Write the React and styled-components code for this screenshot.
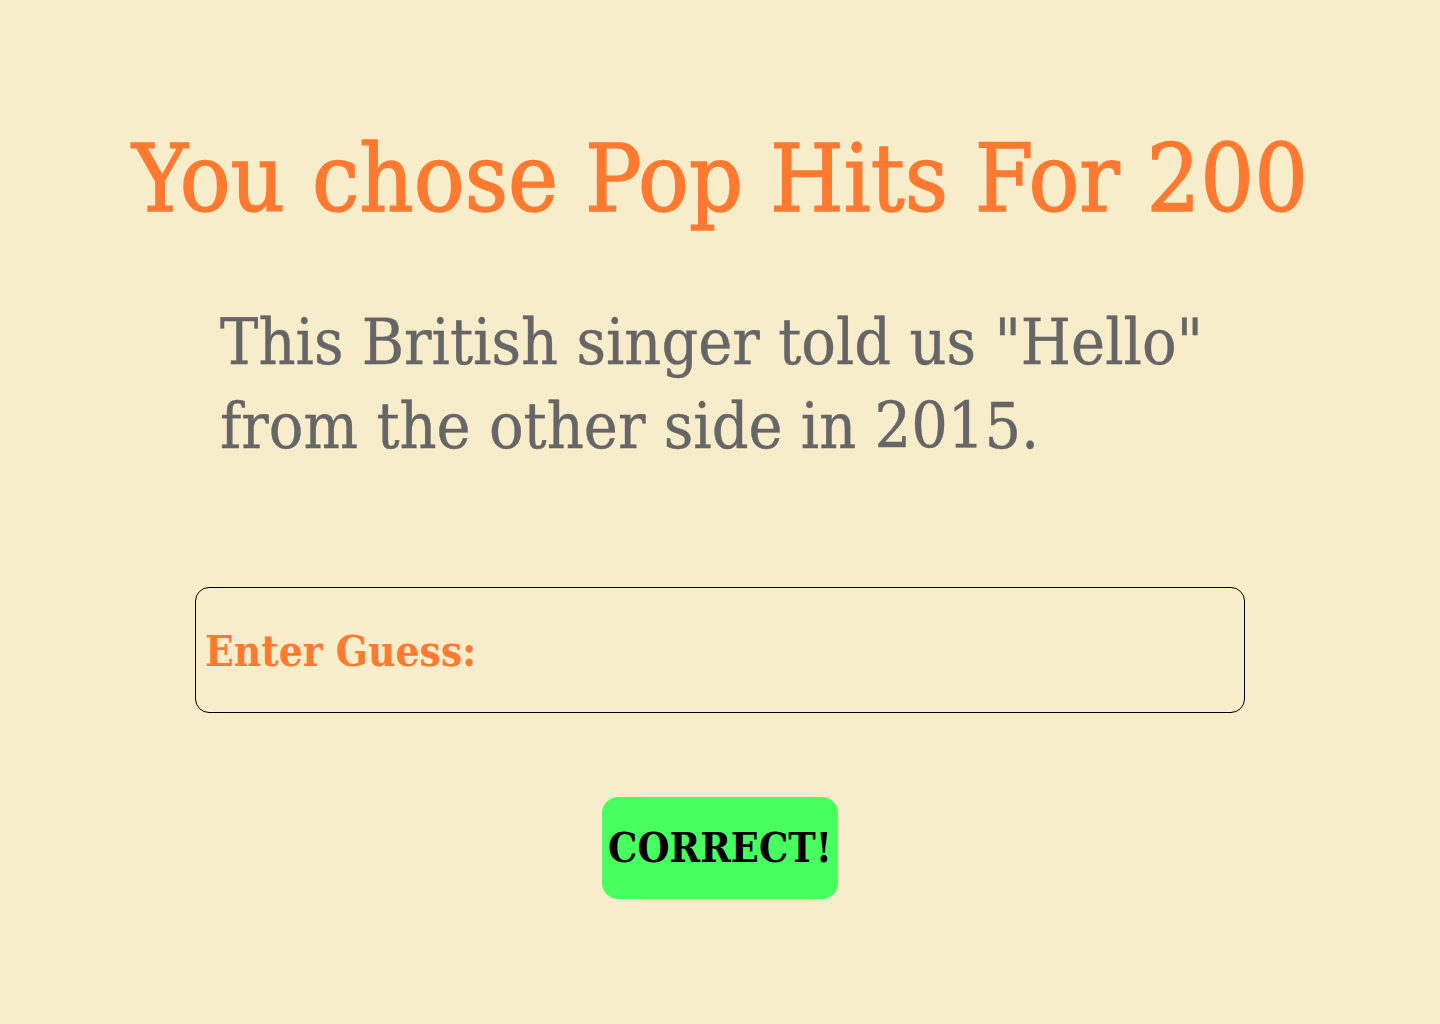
import React, { useState } from 'react';
import styled, { createGlobalStyle } from 'styled-components';

const GlobalStyle = createGlobalStyle`
  html, body {
    margin: 0;
    padding: 0;
    background-color: #f8edca;
  }
  body {
    font-family: "DejaVu Serif Condensed", "DejaVu Serif", "Liberation Serif", serif;
  }
`;

const Page = styled.div`
  min-height: 1024px;
  display: flex;
  flex-direction: column;
  align-items: center;
  padding-top: 119px;
  box-sizing: border-box;
`;

const Title = styled.h1`
  margin: 0;
  font-weight: 400;
  font-size: 94px;
  line-height: 120px;
  color: #ff7a30;
  -webkit-text-stroke: 1.4px #ff7a30;
  text-align: center;
  white-space: nowrap;
`;

const Question = styled.p`
  width: 1000px;
  margin: 61px 0 0;
  font-size: 64px;
  line-height: 84px;
  color: #666666;
  -webkit-text-stroke: 0.4px #666666;
  text-align: left;
`;

const GuessBox = styled.label`
  width: 1050px;
  height: 126px;
  margin-top: 119px;
  box-sizing: border-box;
  border: 1px solid #000;
  border-radius: 14px;
  display: flex;
  align-items: center;
  padding: 0 9px;
`;

const GuessLabel = styled.span`
  font-weight: 700;
  font-size: 42px;
  color: #ff7a30;
  white-space: nowrap;
  margin-top: 2px;
`;

const GuessInput = styled.input`
  flex: 1;
  height: 100%;
  border: none;
  background: transparent;
  outline: none;
  font-family: inherit;
  font-size: 42px;
  color: #333;
`;

const ResultButton = styled.button`
  margin-top: 84px;
  width: 236px;
  height: 102px;
  border: none;
  border-radius: 16px;
  background-color: ${props => (props.correct ? '#47ff5f' : '#ff5a4a')};
  color: #000;
  font-family: inherit;
  font-weight: 700;
  font-size: 41px;
  padding: 0;
  cursor: pointer;
`;

function App() {
  const [guess, setGuess] = useState('');

  return (
    <>
      <GlobalStyle />
      <Page>
        <Title>You chose Pop Hits For 200</Title>
        <Question>
          This British singer told us "Hello" from the other side in 2015.
        </Question>
        <GuessBox>
          <GuessLabel>Enter Guess:</GuessLabel>
          <GuessInput value={guess} onChange={e => setGuess(e.target.value)} />
        </GuessBox>
        <ResultButton correct>CORRECT!</ResultButton>
      </Page>
    </>
  );
}

export default App;
